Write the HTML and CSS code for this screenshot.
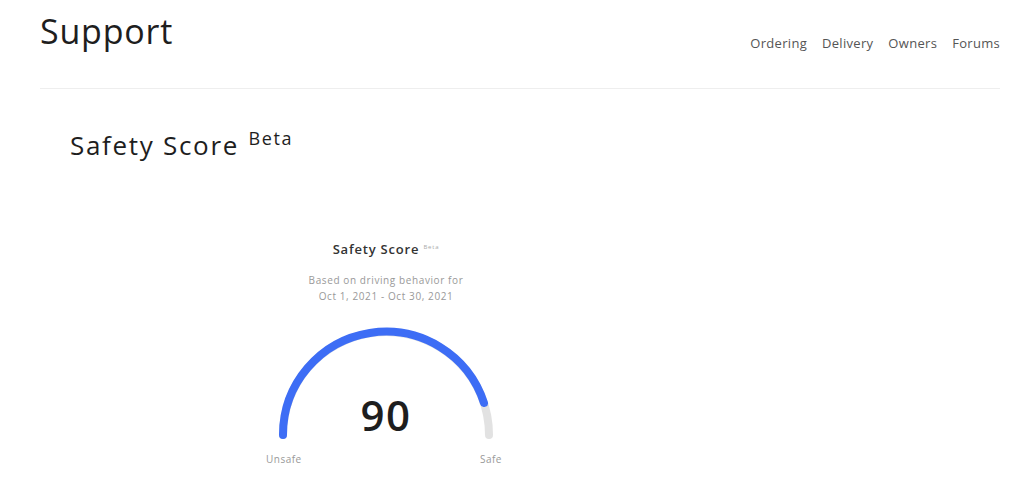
FILE: index.html
```html
<!DOCTYPE html>
<html>
<head>
<meta charset="utf-8">
<link rel="stylesheet" href="styles.css">
</head>
<body>
<header class="top">
  <h1 class="brand">Support</h1>
  <nav class="nav">
    <a>Ordering</a>
    <a>Delivery</a>
    <a>Owners</a>
    <a>Forums</a>
  </nav>
</header>
<main class="main">
  <h2 class="title">Safety Score <sup class="title-beta">Beta</sup></h2>
  <section class="card">
    <div class="card-title">Safety Score <sup class="card-beta">Beta</sup></div>
    <div class="card-sub">Based on driving behavior for<br>Oct 1, 2021 - Oct 30, 2021</div>
    <div class="gauge">
      <svg class="gauge-svg" width="230" height="120" viewBox="0 0 230 120">
        <path d="M12 111 A103 103 0 0 1 218 111" fill="none" stroke="#e2e2e2" stroke-width="8" stroke-linecap="round"/>
        <path d="M12 111 A103 103 0 0 1 213 79" fill="none" stroke="#3d6df5" stroke-width="8" stroke-linecap="round"/>
      </svg>
      <div class="score">90</div>
    </div>
    <div class="labels"><span>Unsafe</span><span>Safe</span></div>
  </section>
</main>
</body>
</html>
```
FILE: styles.css
```css
body {
  margin: 0;
  background: #fff;
  font-family: "Open Sans", "Liberation Sans", sans-serif;
  color: #222;
}
.top {
  margin: 0 24px 0 40px;
  height: 88px;
  border-bottom: 1px solid #eeeeee;
  display: flex;
  justify-content: space-between;
  align-items: flex-start;
}
.brand {
  margin: 8px 0 0;
  font-size: 34px;
  font-weight: 400;
  color: #1e1e1e;
  letter-spacing: 0.8px;
}
.nav {
  margin-top: 34px;
  display: flex;
  gap: 15px;
  font-size: 13px;
  letter-spacing: 0.3px;
  color: #555;
}
.main {
  padding: 0 0 0 70px;
}
.title {
  margin: 41px 0 0;
  font-size: 26px;
  font-weight: 400;
  color: #1e1e1e;
  line-height: 30px;
  letter-spacing: 1.7px;
}
.title-beta {
  font-size: 18px;
  vertical-align: 10px;
  line-height: 0;
  margin-left: 1px;
  letter-spacing: 1.6px;
}
.card {
  width: 260px;
  margin: 80px 0 0 186px;
  text-align: center;
}
.card-title {
  font-size: 13px;
  font-weight: 600;
  color: #333;
  line-height: 18px;
  letter-spacing: 0.8px;
}
.card-beta {
  font-size: 6px;
  font-weight: 400;
  color: #aaa;
  vertical-align: 5px;
  line-height: 0;
}
.card-sub {
  margin-top: 14px;
  font-size: 10px;
  line-height: 16px;
  color: #999;
  letter-spacing: 0.6px;
}
.gauge {
  position: relative;
  width: 230px;
  height: 120px;
  margin: 20px auto 0;
}
.gauge-svg {
  display: block;
}
.score {
  position: absolute;
  left: 0;
  right: 0;
  top: 66px;
  font-size: 42px;
  font-weight: 600;
  color: #1e1e1e;
  line-height: 50px;
  letter-spacing: 1.5px;
}
.labels {
  display: flex;
  justify-content: space-between;
  width: 236px;
  margin: 8px auto 0;
  padding-right: 4px;
  font-size: 10px;
  letter-spacing: 0.5px;
  color: #999;
}
```
